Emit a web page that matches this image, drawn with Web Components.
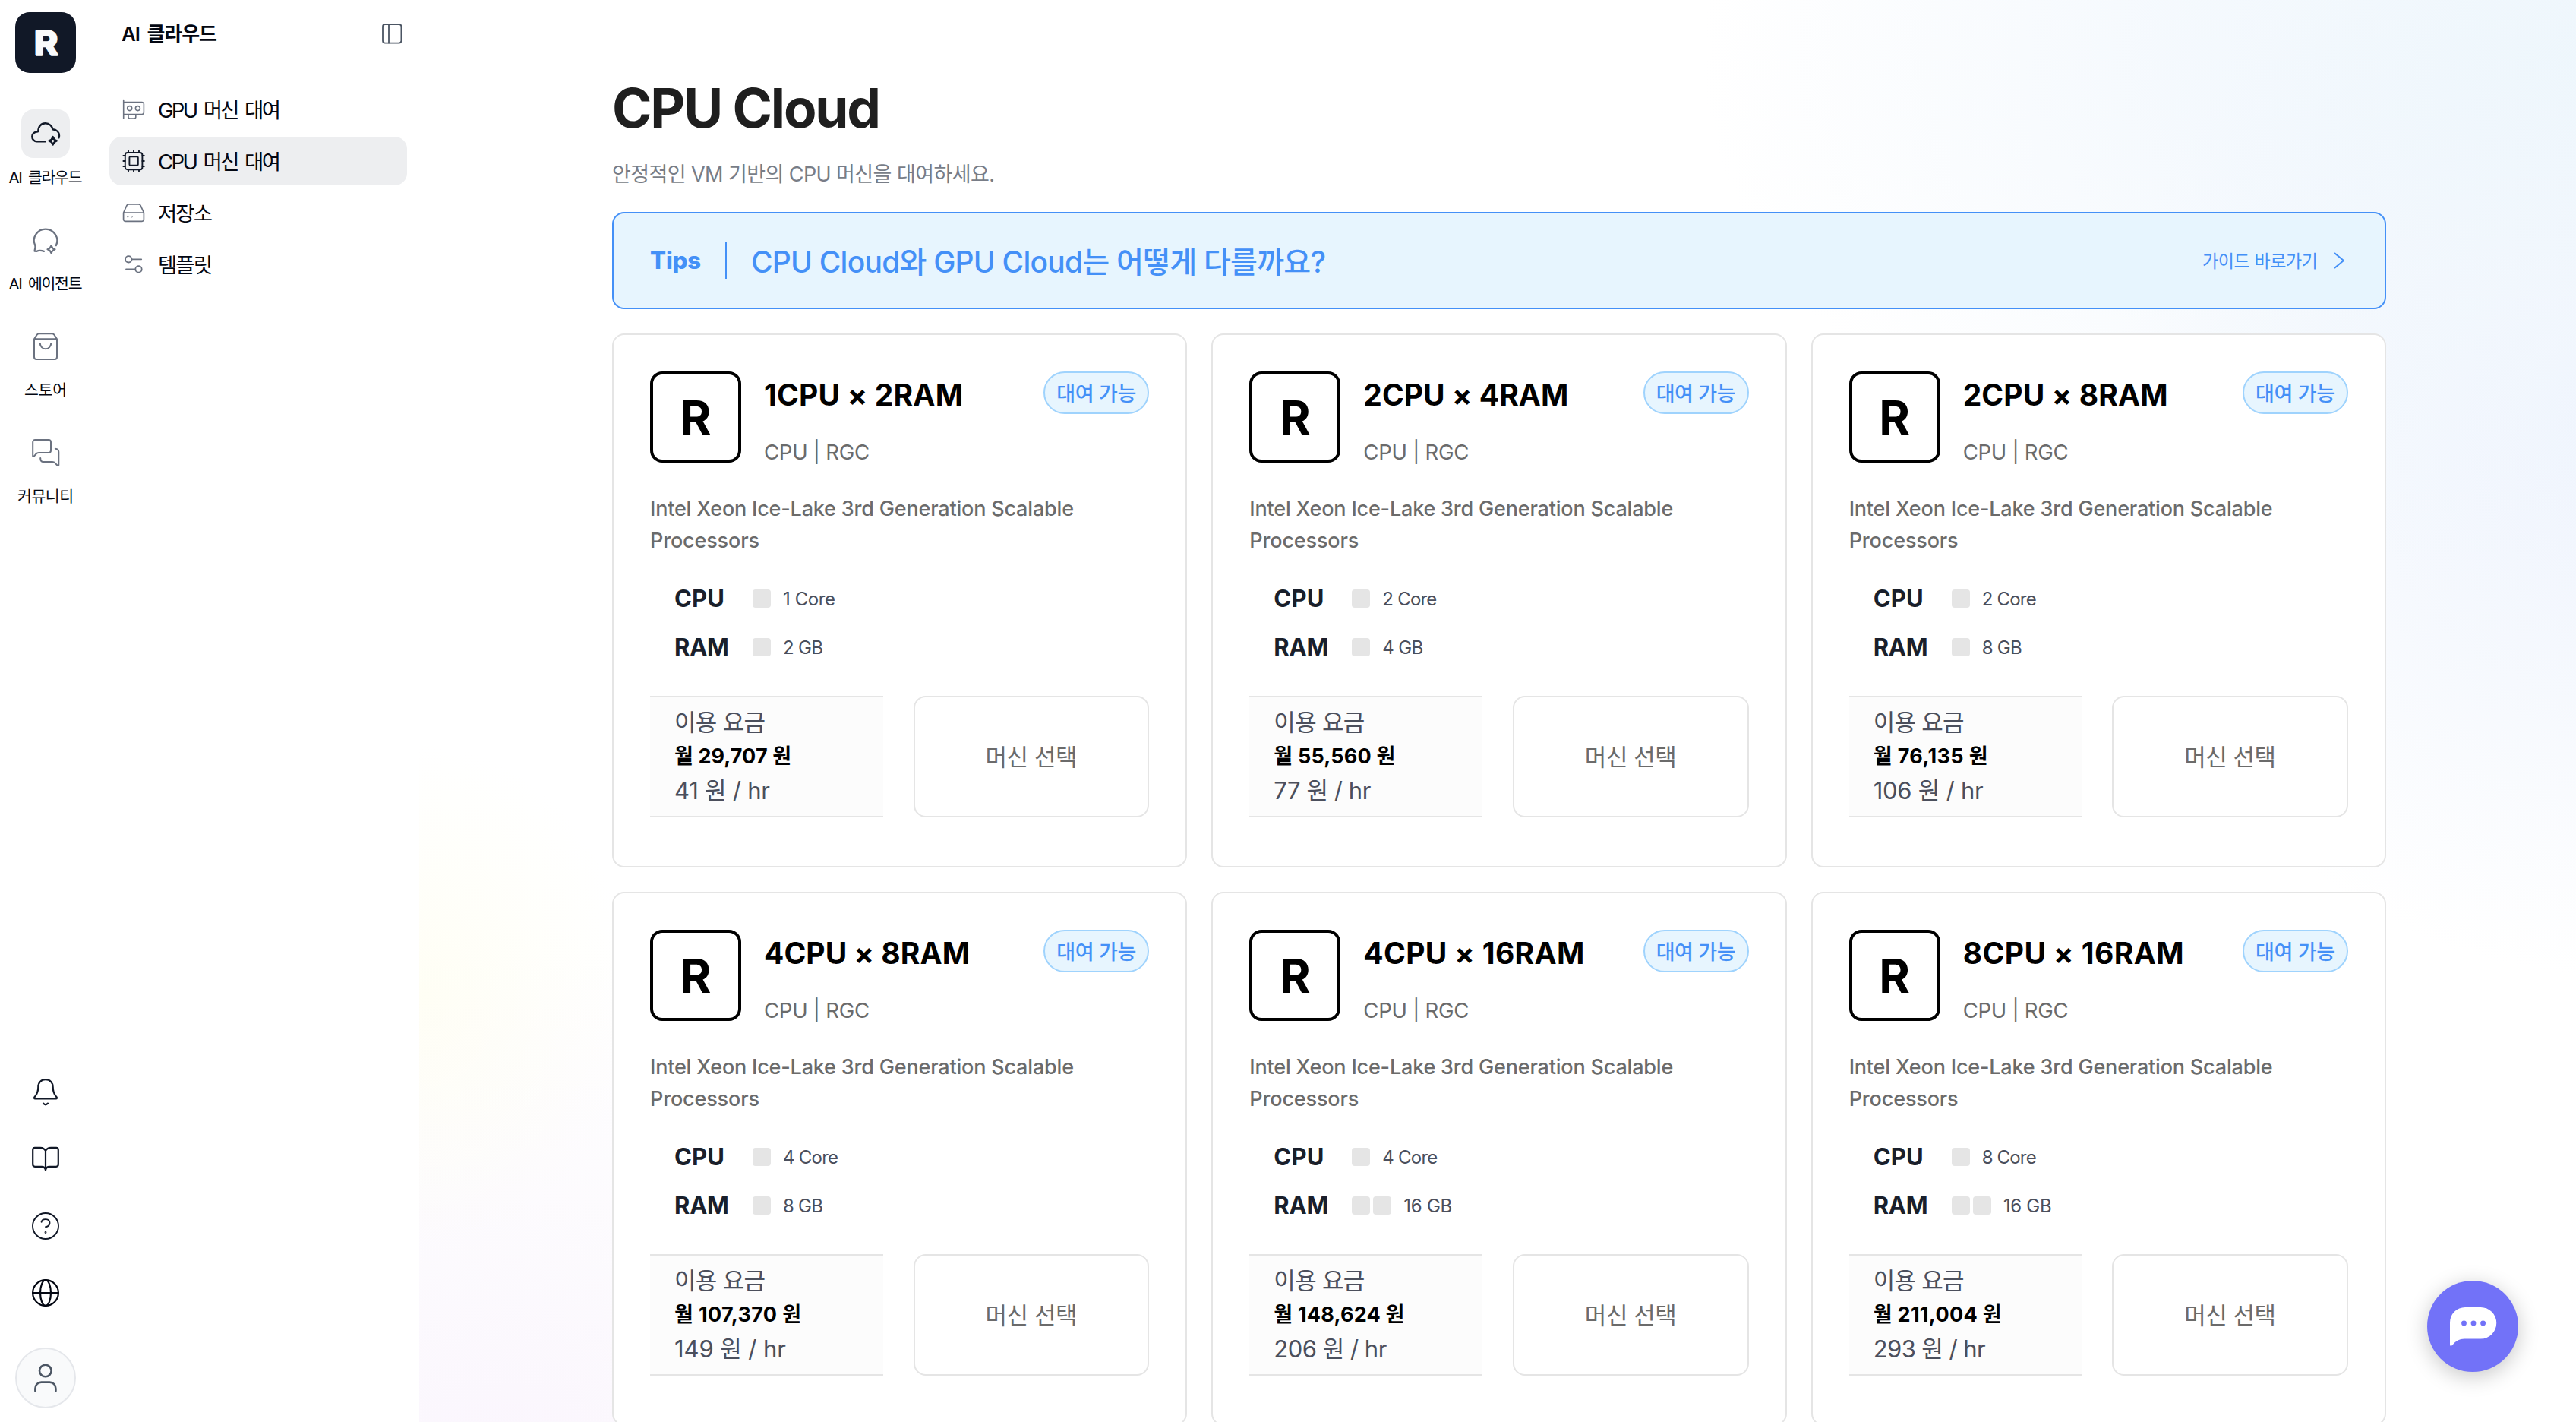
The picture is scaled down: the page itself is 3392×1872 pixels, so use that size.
<!DOCTYPE html>
<html lang="ko">
<head>
<meta charset="utf-8">
<title>CPU Cloud</title>
<style>
  body {
    margin: 0;
    font-family: Inter, "Noto Sans CJK KR", sans-serif;
    background: #fff;
    color: #030712;
    overflow: hidden;
  }
</style>
</head>
<body>
<cloud-app></cloud-app>

<script>
const STAR = (x, y, r) => {
  const k = r * 0.36;
  return `<path d="M${x} ${y - r}Q${x + k * 0.6} ${y - k * 0.6} ${x + r} ${y}Q${x + k * 0.6} ${y + k * 0.6} ${x} ${y + r}Q${x - k * 0.6} ${y + k * 0.6} ${x - r} ${y}Q${x - k * 0.6} ${y - k * 0.6} ${x} ${y - r}Z"/>`;
};

const ICONS = {
  cloud: [40, 2.4, `<path d="M19.7 30.3H8.6A6.3 6.3 0 0 1 8.6 17.6L10.4 17.2C9.9 10.4 14.5 6.3 19.8 6.3 24.9 6.3 28.6 9.8 29.3 14.2 34.5 14.5 38 18 38 22.3 38 23.4 37.8 24.4 37.5 25.3"/>${STAR(29.7, 29.3, 5.2)}`],
  agent: [40, 2.2, `<path d="M33.8 27.2A15.2 15.2 0 1 0 6.2 27C7.2 29.6 5.5 32 5.6 34.6L8 35C11 33.4 14.4 33.6 18 34.9"/>${STAR(27.5, 32.3, 5)}`],
  store: [40, 2, `<path d="M5 10.3V34a3 3 0 0 0 3 3H32a3 3 0 0 0 3-3V10.3L31.4 4.8A3.4 3.4 0 0 0 28.6 3.3H11.4A3.4 3.4 0 0 0 8.6 4.8ZM5 10.3H35M12.8 16a7.2 7.3 0 0 0 14.4 0"/>`],
  community: [40, 2, `<path d="M3.2 24.6V6a3 3 0 0 1 3-3H24a3 3 0 0 1 3 3V17a3 3 0 0 1-3 3H11Q9 20 7.6 21.5L4.8 24.6Q3.2 26 3.2 24.6ZM32.8 14.7Q37.3 14.9 37.3 19V36Q37 38 35.6 36.8L32.6 33.6Q31.2 32 29 32H17Q13.2 32 13.2 27"/>`],
  bell: [40, 2.2, `<path d="M20 3.2C14 3.2 10.3 7.4 10.3 13 10.3 21.5 7.6 23.6 5.4 26.3 4.6 27.5 5 28.5 6.4 28.5H33.6C35 28.5 35.4 27.5 34.6 26.3 32.4 23.6 29.7 21.5 29.7 13 29.7 7.4 26 3.2 20 3.2ZM17 34.6Q20 38 23 34.6"/>`],
  book: [40, 2.2, `<path d="M20 9Q18 4.8 13 4.8H6A3 3 0 0 0 3.2 7.7V27A3 3 0 0 0 6 29.900H15Q19 29.900 20 34.400 21 29.900 25 29.900H34A3 3 0 0 0 36.800 27V7.700A3 3 0 0 0 34 4.800H27Q22 4.800 20 9ZM20 9V34"/>`],
  help: [40, 1.9, `<circle cx="20" cy="20" r="17"/><path d="M14.6 14.8C15.6 9.5 25.6 10 25.5 16 25.5 19.2 22.6 20.8 20 21.2"/><circle cx="20" cy="28.5" r=".5"/>`],
  globe: [40, 2.2, `<circle cx="20" cy="20" r="16.9"/><ellipse cx="20" cy="20" rx="7" ry="16.9"/><path d="M3 20H37"/>`],
  user: [40, 2.6, `<circle cx="19.8" cy="10.5" r="7.8"/><path d="M6.4 37.3V34A8 8 0 0 1 14.4 25.6H25.4A8 8 0 0 1 33.4 34V37.3"/>`],
  panel: [32, 1.8, `<rect x="4" y="4" width="24.4" height="24.6" rx="3"/><path d="M12 4V28.6"/>`],
  gpu: [32, 1.6, `<path d="M2.7 3.5V28M2.7 6.5H26.8A2.6 2.6 0 0 1 29.4 9.1V20A2.6 2.6 0 0 1 26.8 22.5H2.7M9 22.5V26A1.8 1.8 0 0 0 10.8 28H17A1.8 1.8 0 0 0 18.8 26V22.5"/><circle cx="10.7" cy="14.6" r="3"/><circle cx="21.4" cy="14.6" r="3"/>`],
  cpu: [32, 1.9, `<rect x="4.8" y="5" width="22.6" height="22.2" rx="3"/><rect x="10.4" y="10.4" width="11.4" height="11.2" rx="1"/><path d="M9 2.5V5M16 2.5V5M23 2.5V5M9 27.2V29.6M16 27.2V29.6M23 27.2V29.6M2.4 9H4.8M2.4 16H4.8M2.4 23H4.8M27.4 9H29.8M27.4 16H29.8M27.4 23H29.8"/>`],
  storage: [32, 1.7, `<path d="M2.6 16L7 6.4Q7.8 4.8 9.6 4.8H22.4Q24.2 4.8 25 6.4L29.4 16V24.6A2.8 2.8 0 0 1 26.6 27.4H5.4A2.8 2.8 0 0 1 2.6 24.6ZM2.6 16H29.4"/><circle cx="8.3" cy="21.3" r=".3"/><circle cx="13.6" cy="21.3" r=".3"/>`],
  template: [32, 1.8, `<circle cx="9.3" cy="9.3" r="4.2"/><path d="M13.5 9.3H26.2"/><circle cx="22.5" cy="22.4" r="4.2"/><path d="M6 22.4H18.3"/>`],
  arrow: [32, 2, `<path d="M10.5 6.5L22 16L10.5 25.5"/>`],
};

// Single line of text; "fit" gives its advance width in px.
class FitText extends HTMLElement {
  constructor() {
    super();
    this.attachShadow({ mode: 'open' }).innerHTML = `
      <style>:host { display: inline-block; white-space: nowrap; }</style><slot></slot>`;
  }

  connectedCallback() {
    const target = Number(this.getAttribute('fit'));
    const count = this.textContent.length - 1;
    const natural = this.getBoundingClientRect().width;
    if (!target || !natural || count < 1) return;
    const gap = (target - natural) / count;
    this.style.letterSpacing = gap.toFixed(3) + 'px';
    this.style.marginRight = (-gap).toFixed(3) + 'px';
  }
}
customElements.define('fit-text', FitText);

class LineIcon extends HTMLElement {
  connectedCallback() {
    const [size, stroke, body] = ICONS[this.getAttribute('name')];
    this.attachShadow({ mode: 'open' }).innerHTML = `
      <style>
        :host { display: inline-flex; flex: none; }
        svg { display: block; width: ${size}px; height: ${size}px; }
      </style>
      <svg viewBox="0 0 ${size} ${size}" fill="none" stroke="currentColor" stroke-width="${stroke}"
        stroke-linecap="round" stroke-linejoin="round">${body}</svg>`;
  }
}
customElements.define('line-icon', LineIcon);

class RailItem extends HTMLElement {
  connectedCallback() {
    this.attachShadow({ mode: 'open' }).innerHTML = `
      <style>
        :host { display: flex; flex-direction: column; align-items: center; height: 140px; }
        .box {
          display: flex; align-items: center; justify-content: center;
          width: 64px; height: 64px; border-radius: 16px; color: #6b7280;
        }
        :host([active]) .box { background: #edeef0; color: #111827; }
        .label { margin-top: 11px; font-size: 20.5px; line-height: 30px; word-spacing: 4px; }
      </style>
      <div class="box"><line-icon name="${this.getAttribute('icon')}"></line-icon></div>
      <div class="label"><slot></slot></div>`;
  }
}
customElements.define('rail-item', RailItem);

class AppRail extends HTMLElement {
  connectedCallback() {
    this.attachShadow({ mode: 'open' }).innerHTML = `
      <style>
        :host {
          display: flex; flex-direction: column; align-items: center; flex: none;
          box-sizing: border-box; width: 120px; height: 100%; padding: 16px 0 18px;
        }
        .logo { display: block; width: 80px; height: 80px; background: #111827; border-radius: 19px; margin-bottom: 48px; }
        .logo text {
          font: 600 43px Inter, sans-serif; fill: #f9fafb; stroke: #f9fafb;
          stroke-width: 3.4px; stroke-linejoin: round;
        }
        rail-item { width: 120px; }
        .tools { display: flex; flex-direction: column; gap: 48px; margin-top: auto; color: #111827; }
        .tools :last-child { color: #030712; }
        .avatar {
          display: flex; align-items: center; justify-content: center; box-sizing: border-box;
          width: 80px; height: 80px; margin-top: 52px; border: 2px solid #e5e7eb;
          border-radius: 50%; background: #f9fafb; color: #4b5563;
        }
      </style>
      <svg class="logo" viewBox="0 0 80 80"><text x="25" y="56" textLength="31" lengthAdjust="spacingAndGlyphs">R</text></svg>
      <rail-item icon="cloud" active><fit-text fit="97">AI 클라우드</fit-text></rail-item>
      <rail-item icon="agent"><fit-text fit="97">AI 에이전트</fit-text></rail-item>
      <rail-item icon="store"><fit-text fit="56">스토어</fit-text></rail-item>
      <rail-item icon="community"><fit-text fit="74">커뮤니티</fit-text></rail-item>
      <div class="tools">
        <line-icon name="bell"></line-icon>
        <line-icon name="book"></line-icon>
        <line-icon name="help"></line-icon>
        <line-icon name="globe"></line-icon>
      </div>
      <div class="avatar"><line-icon name="user"></line-icon></div>`;
  }
}
customElements.define('app-rail', AppRail);

class MenuItem extends HTMLElement {
  connectedCallback() {
    this.attachShadow({ mode: 'open' }).innerHTML = `
      <style>
        :host {
          display: flex; align-items: center; gap: 16px; box-sizing: border-box;
          height: 64px; padding: 0 16px; border-radius: 16px; font-size: 27.5px; line-height: 40px;
          word-spacing: 4px;
        }
        line-icon { color: #6b7280; }
        .label { padding-top: 2px; }
        :host([active]) { background: #edeef0; }
        :host([active]) line-icon { color: #111827; }
      </style>
      <line-icon name="${this.getAttribute('icon')}"></line-icon>
      <span class="label"><slot></slot></span>`;
  }
}
customElements.define('menu-item', MenuItem);

class SideMenu extends HTMLElement {
  connectedCallback() {
    this.attachShadow({ mode: 'open' }).innerHTML = `
      <style>
        :host { display: block; flex: none; box-sizing: border-box; width: 432px; padding: 0 16px 0 24px; }
        header {
          display: flex; align-items: center; justify-content: space-between;
          height: 88px; padding: 0 4px 0 16px; margin-bottom: 24px;
          font-size: 26px; font-weight: 600; word-spacing: 4px;
        }
        header fit-text { padding-bottom: 3px; }
        header line-icon { color: #4b5563; }
        nav { display: flex; flex-direction: column; gap: 4px; }
      </style>
      <header><fit-text fit="126">AI 클라우드</fit-text><line-icon name="panel"></line-icon></header>
      <nav>
        <menu-item icon="gpu"><fit-text fit="162">GPU 머신 대여</fit-text></menu-item>
        <menu-item icon="cpu" active><fit-text fit="162">CPU 머신 대여</fit-text></menu-item>
        <menu-item icon="storage"><fit-text fit="72">저장소</fit-text></menu-item>
        <menu-item icon="template"><fit-text fit="72">템플릿</fit-text></menu-item>
      </nav>`;
  }
}
customElements.define('side-menu', SideMenu);

class TipsBanner extends HTMLElement {
  connectedCallback() {
    this.attachShadow({ mode: 'open' }).innerHTML = `
      <style>
        :host {
          display: flex; align-items: center; box-sizing: border-box; height: 128px;
          padding: 0 44px 0 48px; border: 2px solid #4490f7; border-radius: 16px;
          background: #e7f5fe; color: #4490f7;
        }
        .tag { padding-bottom: 2px; font-size: 31px; font-weight: 800; }
        .bar { width: 2px; height: 48px; margin: 0 32px; background: #4490f7; }
        .question { padding-bottom: 3px; font-size: 39px; font-weight: 500; }
        .link { display: flex; align-items: center; gap: 12px; margin-left: auto; font-size: 23px; }
        .link fit-text { padding-bottom: 3px; }
      </style>
      <span class="tag"><fit-text fit="67">Tips</fit-text></span>
      <span class="bar"></span>
      <span class="question"><fit-text fit="757">CPU Cloud와 GPU Cloud는 어떻게 다를까요?</fit-text></span>
      <span class="link"><fit-text fit="152">가이드 바로가기</fit-text><line-icon name="arrow"></line-icon></span>`;
  }
}
customElements.define('tips-banner', TipsBanner);

class SpecRow extends HTMLElement {
  connectedCallback() {
    const blocks = '<i></i>'.repeat(Number(this.getAttribute('blocks')) || 1);
    this.attachShadow({ mode: 'open' }).innerHTML = `
      <style>
        :host { display: flex; align-items: center; height: 40px; padding-left: 32px; }
        .name { width: 103px; padding-bottom: 1px; font-size: 31px; font-weight: 700; color: #1a1f2b; }
        .blocks { display: flex; gap: 4px; margin-right: 16px; }
        i { width: 24px; height: 24px; border-radius: 4px; background: #e5e5e5; }
        .value { font-size: 24px; color: #4b4f5c; }
      </style>
      <span class="name"><slot name="name"></slot></span>
      <span class="blocks">${blocks}</span>
      <span class="value"><slot></slot></span>`;
  }
}
customElements.define('spec-row', SpecRow);

class MachineCard extends HTMLElement {
  set machine(m) {
    this.attachShadow({ mode: 'open' }).innerHTML = `
      <style>
        :host {
          display: block; box-sizing: border-box; min-width: 0; height: 703px; padding: 48px;
          border: 2px solid #e5e5e5; border-radius: 16px; background: #fff;
        }
        .head { display: flex; height: 120px; align-items: flex-start; }
        .logo {
          display: flex; align-items: center; justify-content: center; flex: none;
          box-sizing: border-box; width: 120px; height: 120px; margin-right: 30px;
          border: 4px solid #000; border-radius: 16px;
          font-size: 62px; font-weight: 700; color: #000;
        }
        .title { font-size: 39px; font-weight: 700; line-height: 62px; color: #000; }
        .sub { margin-top: 26px; font-size: 27.5px; line-height: 36px; color: #6b6b6b; }
        .badge {
          display: flex; align-items: center; justify-content: center; flex: none;
          box-sizing: border-box; width: 139px; height: 56px; margin-left: auto; padding-bottom: 2px;
          border: 2px solid #9fd3fd; border-radius: 28px; background: #e7f5fe;
          font-size: 27px; font-weight: 500; color: #4490f7;
        }
        .desc {
          display: flex; flex-direction: column; align-items: flex-start; margin-top: 40px;
          font-size: 27px; font-weight: 500; line-height: 42px; color: #6b6b6b;
        }
        .specs { display: flex; flex-direction: column; gap: 24px; margin-top: 35px; }
        .foot { display: grid; grid-template-columns: 1fr 1fr; gap: 40px; height: 160px; margin-top: 44px; }
        .price {
          display: flex; flex-direction: column; align-items: flex-start; justify-content: center;
          box-sizing: border-box; margin-right: 2px; padding: 0 0 2px 32px;
          border: solid #e5e5e5; border-width: 2px 0; background: #fcfcfc;
          font-size: 31px; line-height: 45px; color: #4b4f5c;
        }
        .month { font-size: 27px; font-weight: 700; color: #000; }
        button {
          padding: 0 0 3px; margin-left: -2px; border: 2px solid #e5e5e5; border-radius: 16px; background: #fff;
          font: inherit; font-size: 31px; color: #6b6b6b;
        }
      </style>
      <div class="head">
        <div class="logo">R</div>
        <div>
          <div class="title"><fit-text fit="${m.title[1]}">${m.title[0]}</fit-text></div>
          <div class="sub"><fit-text fit="139">CPU | RGC</fit-text></div>
        </div>
        <div class="badge"><fit-text fit="105">대여 가능</fit-text></div>
      </div>
      <div class="desc">
        <fit-text fit="558">Intel Xeon Ice-Lake 3rd Generation Scalable</fit-text>
        <fit-text fit="144">Processors</fit-text>
      </div>
      <div class="specs">
        <spec-row><fit-text slot="name" fit="66">CPU</fit-text><fit-text fit="${m.cpu[1]}">${m.cpu[0]}</fit-text></spec-row>
        <spec-row blocks="${m.blocks}"><fit-text slot="name" fit="72">RAM</fit-text><fit-text fit="${m.ram[1]}">${m.ram[0]}</fit-text></spec-row>
      </div>
      <div class="foot">
        <div class="price">
          <fit-text fit="120">이용 요금</fit-text>
          <fit-text class="month" fit="${m.month[1]}">${m.month[0]}</fit-text>
          <fit-text fit="${m.hour[1]}">${m.hour[0]}</fit-text>
        </div>
        <button><fit-text fit="121">머신 선택</fit-text></button>
      </div>`;
  }
}
customElements.define('machine-card', MachineCard);

// [text, advance width]
const MACHINES = [
  { title: ['1CPU × 2RAM', 262], cpu: ['1 Core', 69], ram: ['2 GB', 53], blocks: 1, month: ['월 29,707 원', 154], hour: ['41 원 / hr', 126] },
  { title: ['2CPU × 4RAM', 270], cpu: ['2 Core', 72], ram: ['4 GB', 54], blocks: 1, month: ['월 55,560 원', 160], hour: ['77 원 / hr', 128] },
  { title: ['2CPU × 8RAM', 270], cpu: ['2 Core', 72], ram: ['8 GB', 53], blocks: 1, month: ['월 76,135 원', 151], hour: ['106 원 / hr', 145] },
  { title: ['4CPU × 8RAM', 271], cpu: ['4 Core', 73], ram: ['8 GB', 53], blocks: 1, month: ['월 107,370 원', 167], hour: ['149 원 / hr', 147] },
  { title: ['4CPU × 16RAM', 291], cpu: ['4 Core', 73], ram: ['16 GB', 64], blocks: 2, month: ['월 148,624 원', 172], hour: ['206 원 / hr', 149] },
  { title: ['8CPU × 16RAM', 291], cpu: ['8 Core', 72], ram: ['16 GB', 64], blocks: 2, month: ['월 211,004 원', 169], hour: ['293 원 / hr', 148] },
];

class ChatButton extends HTMLElement {
  connectedCallback() {
    this.attachShadow({ mode: 'open' }).innerHTML = `
      <style>
        :host {
          display: block; width: 120px; height: 120px; border-radius: 50%;
          background: #7272f8; box-shadow: 0 6px 28px rgba(0, 0, 0, 0.22);
        }
        svg { display: block; width: 120px; height: 120px; }
      </style>
      <svg viewBox="0 0 120 120" fill="#7272f8">
        <path fill="#fff" d="M30 84V55A20 20 0 0 1 50 35H70.5A20.5 20.5 0 0 1 70.5 76.5H49Q39.5 76.5 33.5 84.5Q30.5 87.5 30 84Z"/>
        <circle cx="48.5" cy="56" r="3.4"/><circle cx="61" cy="56" r="3.4"/><circle cx="73.6" cy="56" r="3.4"/>
      </svg>`;
  }
}
customElements.define('chat-button', ChatButton);

class CloudApp extends HTMLElement {
  connectedCallback() {
    this.attachShadow({ mode: 'open' }).innerHTML = `
      <style>
        :host { display: flex; width: 100vw; height: 100vh; overflow: hidden; position: relative; }
        main {
          flex: 1; min-width: 0; box-sizing: border-box; padding: 94px 250px 0 254px;
          background:
            radial-gradient(ellipse 1150px 700px at 100% 4%, rgba(237, 246, 252, 0.9), rgba(241, 247, 253, 0.75) 45%, transparent),
            radial-gradient(ellipse 640px 720px at 101% 30%, rgba(235, 241, 253, 0.8), rgba(240, 245, 253, 0.6) 50%, transparent),
            radial-gradient(ellipse 280px 330px at 0% 70%, rgba(255, 254, 242, 0.8), transparent),
            radial-gradient(ellipse 760px 760px at 4% 106%, rgba(250, 244, 253, 0.95), rgba(251, 248, 253, 0.7) 45%, transparent),
            #fff;
        }
        h1 { margin: 0; font-size: 71px; font-weight: 700; line-height: 97px; color: #1f1f1f; }
        p { margin: 19px 0 29px; font-size: 27px; line-height: 40px; color: #787d87; }
        .grid { display: grid; grid-template-columns: repeat(3, 1fr); gap: 32px; margin-top: 32px; }
        chat-button { position: absolute; right: 76px; bottom: 66px; }
      </style>
      <app-rail></app-rail>
      <side-menu></side-menu>
      <main>
        <h1><fit-text fit="354">CPU Cloud</fit-text></h1>
        <p><fit-text fit="504">안정적인 VM 기반의 CPU 머신을 대여하세요.</fit-text></p>
        <tips-banner></tips-banner>
        <div class="grid"></div>
      </main>
      <chat-button></chat-button>`;

    const grid = this.shadowRoot.querySelector('.grid');
    for (const m of MACHINES) {
      const card = document.createElement('machine-card');
      grid.append(card);
      card.machine = m;
    }
  }
}
customElements.define('cloud-app', CloudApp);
</script>
</body>
</html>
